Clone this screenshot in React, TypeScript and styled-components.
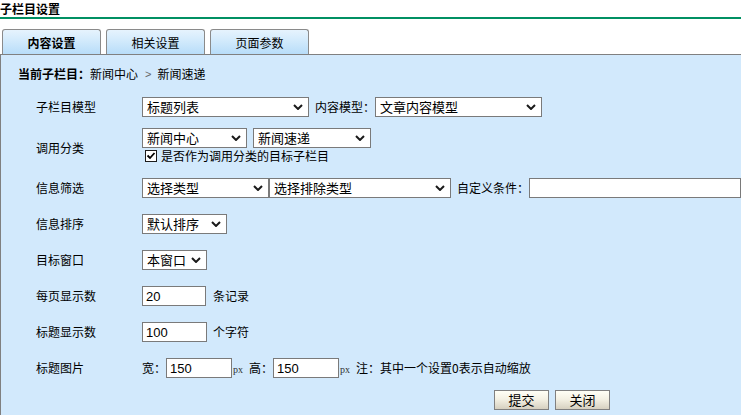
import React from "react";
import styled, { createGlobalStyle } from "styled-components";

const GlobalStyle = createGlobalStyle`
  html, body { margin: 0; padding: 0; background: #ffffff; overflow: hidden; }
  body {
    font-family: "Noto Sans CJK SC", "Liberation Sans", sans-serif;
    font-size: 12px;
    color: #000;
  }
  * { box-sizing: border-box; }
`;

const Page = styled.div`
  width: 741px;
  height: 415px;
  overflow: hidden;
  display: flex;
  flex-direction: column;
`;

const Title = styled.h1`
  margin: 0;
  height: 19px;
  font-size: 12px;
  font-weight: bold;
  line-height: 17px;
  border-bottom: 2px solid #009063;
`;

const TabBar = styled.div`
  display: flex;
  gap: 5px;
  margin-top: 10px;
  padding-left: 2px;
  height: 25px;
`;

const Tab = styled.div<{ $active?: boolean }>`
  width: 99px;
  height: 25px;
  border: 1px solid #8a8a8a;
  border-bottom: none;
  border-radius: 3px 3px 0 0;
  background: linear-gradient(#e6f3fd 0%, #d4ebfc 40%, #b8ddf9 100%);
  display: flex;
  align-items: center;
  justify-content: center;
  font-size: 12px;
  font-weight: ${(p) => (p.$active ? "bold" : "normal")};
  line-height: 16px;
  padding-top: 1px;
`;

const Panel = styled.div`
  flex: 1;
  background: #d2e9fc;
  border-top: 1px solid #808080;
  border-left: 1px solid #808080;
  padding-top: 11px;
  display: flex;
  flex-direction: column;
`;

const Crumb = styled.div`
  height: 16px;
  line-height: 16px;
  padding-left: 17px;
  margin-bottom: 6px;
  display: flex;
  align-items: center;
  white-space: nowrap;
`;

const CrumbHead = styled.b`
  font-weight: bold;
`;

const CrumbSep = styled.span`
  color: #666;
  font-family: "Liberation Sans", sans-serif;
  font-size: 11px;
  margin: 0 6px 0 7px;
`;

const Form = styled.div`
  display: flex;
  flex-direction: column;
  padding-left: 35px;
`;

const Row = styled.div<{ $h: number }>`
  display: grid;
  grid-template-columns: 106px 1fr;
  align-items: center;
  height: ${(p) => p.$h}px;
`;

const Label = styled.div`
  white-space: nowrap;
  line-height: 16px;
`;

const Field = styled.div`
  display: flex;
  align-items: center;
  white-space: nowrap;
`;

const Stack = styled.div`
  display: flex;
  flex-direction: column;
  align-self: start;
  padding-top: 3px;
`;

const SelectShell = styled.div<{ $w: number; $ml?: number }>`
  width: ${(p) => p.$w}px;
  height: 20px;
  margin-left: ${(p) => p.$ml ?? 0}px;
  border: 1px solid #7a7a7a;
  background: #fff;
  display: flex;
  align-items: center;
  padding-left: 4px;
  font-size: 13px;
  line-height: 18px;
  flex-shrink: 0;
`;

const SelectText = styled.span`
  flex: 1;
  overflow: hidden;
`;

const Chevron = styled.svg`
  width: 10px;
  height: 6px;
  margin-right: 5px;
  flex-shrink: 0;
`;

const Select = ({ w, ml, children }: { w: number; ml?: number; children?: React.ReactNode }) => (
  <SelectShell $w={w} $ml={ml}>
    <SelectText>{children}</SelectText>
    <Chevron viewBox="0 0 10 6">
      <path d="M1 1 L5 5 L9 1" stroke="#1a1a1a" strokeWidth="2" fill="none" />
    </Chevron>
  </SelectShell>
);

const TextInput = styled.input<{ $w: number }>`
  width: ${(p) => p.$w}px;
  height: 20px;
  border: 1px solid #7a7a7a;
  background: #fff;
  padding: 0 3px;
  margin: 0;
  font-family: "Liberation Sans", sans-serif;
  font-size: 13px;
  color: #000;
  outline: none;
  flex-shrink: 0;
`;

const Text = styled.span<{ $ml?: number }>`
  margin-left: ${(p) => p.$ml ?? 0}px;
  line-height: 16px;
`;

const Px = styled.span`
  font-family: "Liberation Serif", serif;
  font-size: 10px;
  color: #333;
  margin: 2px 6px 0 1px;
`;

const CheckLine = styled.label`
  display: flex;
  align-items: center;
  height: 14px;
  line-height: 14px;
  margin-top: 1px;
`;

const CheckBox = styled.svg`
  width: 12px;
  height: 12px;
  margin: 0 4px 0 3px;
  flex-shrink: 0;
`;

const Buttons = styled.div`
  display: flex;
  gap: 6px;
  padding-left: 458px;
  margin-top: 4px;
`;

const Button = styled.button`
  width: 55px;
  height: 20px;
  border: 1px solid #808080;
  background: linear-gradient(#fffff6 0%, #f4f1e4 45%, #d6d0c0 100%);
  font-family: "Noto Sans CJK SC", sans-serif;
  font-size: 13px;
  line-height: 16px;
  padding: 0;
  color: #000;
`;

export default function App() {
  return (
    <Page>
      <GlobalStyle />
      <Title>子栏目设置</Title>
      <TabBar>
        <Tab $active>内容设置</Tab>
        <Tab>相关设置</Tab>
        <Tab>页面参数</Tab>
      </TabBar>
      <Panel>
        <Crumb>
          <CrumbHead>当前子栏目：</CrumbHead>
          新闻中心
          <CrumbSep>&gt;</CrumbSep>
          新闻速递
        </Crumb>
        <Form>
          <Row $h={37}>
            <Label>子栏目模型</Label>
            <Field>
              <Select w={167}>标题列表</Select>
              <Text $ml={6}>内容模型：</Text>
              <Select w={167}>文章内容模型</Select>
            </Field>
          </Row>
          <Row $h={45}>
            <Label>调用分类</Label>
            <Stack>
              <Field>
                <Select w={105}>新闻中心</Select>
                <Select w={118} ml={6}>新闻速递</Select>
              </Field>
              <CheckLine>
                <CheckBox viewBox="0 0 12 12">
                  <rect x="0.5" y="0.5" width="11" height="11" fill="#fff" stroke="#1c1c1c" />
                  <path d="M2.5 5.5 L5 8 L9.5 3" stroke="#000" strokeWidth="1.8" fill="none" />
                </CheckBox>
                是否作为调用分类的目标子栏目
              </CheckLine>
            </Stack>
          </Row>
          <Row $h={36}>
            <Label>信息筛选</Label>
            <Field>
              <Select w={127}>选择类型</Select>
              <Select w={182}>选择排除类型</Select>
              <Text $ml={6}>自定义条件：</Text>
              <TextInput $w={212} defaultValue="" />
            </Field>
          </Row>
          <Row $h={36}>
            <Label>信息排序</Label>
            <Field>
              <Select w={85}>默认排序</Select>
            </Field>
          </Row>
          <Row $h={36}>
            <Label>目标窗口</Label>
            <Field>
              <Select w={65}>本窗口</Select>
            </Field>
          </Row>
          <Row $h={36}>
            <Label>每页显示数</Label>
            <Field>
              <TextInput $w={64} defaultValue="20" />
              <Text $ml={7}>条记录</Text>
            </Field>
          </Row>
          <Row $h={36}>
            <Label>标题显示数</Label>
            <Field>
              <TextInput $w={65} defaultValue="100" />
              <Text $ml={6}>个字符</Text>
            </Field>
          </Row>
          <Row $h={36}>
            <Label>标题图片</Label>
            <Field>
              <Text>宽：</Text>
              <TextInput $w={66} defaultValue="150" />
              <Px>px</Px>
              <Text>高：</Text>
              <TextInput $w={66} defaultValue="150" />
              <Px>px</Px>
              <Text>注：其中一个设置0表示自动缩放</Text>
            </Field>
          </Row>
          <Buttons>
            <Button>提交</Button>
            <Button>关闭</Button>
          </Buttons>
        </Form>
      </Panel>
    </Page>
  );
}
